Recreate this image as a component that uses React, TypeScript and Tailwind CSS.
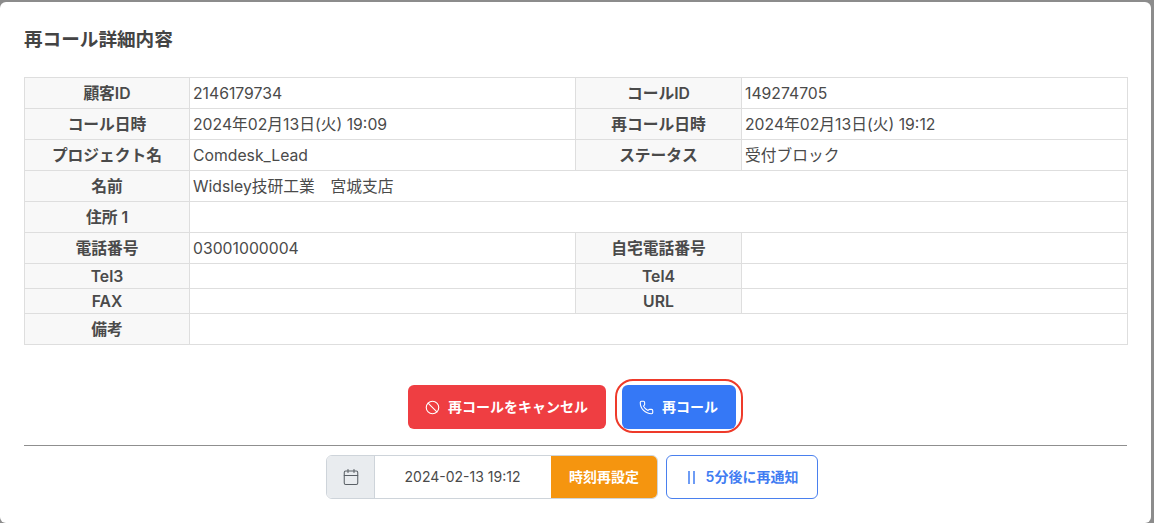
import { Ban, Calendar, Phone } from "lucide-react";

const font = "[font-family:Inter,'Noto_Sans_CJK_JP',sans-serif]";

function Head({ children }: { children?: React.ReactNode }) {
  return (
    <th className="border border-[#dedede] bg-[#f8f8f8] p-0 pt-px text-center align-middle text-[15.75px] leading-none font-semibold text-[#4a4a4a]">
      {children}
    </th>
  );
}

function Cell({ children, colSpan }: { children?: React.ReactNode; colSpan?: number }) {
  return (
    <td colSpan={colSpan} className="border border-[#dedede] pt-px pr-1 pb-0 pl-[3px] align-middle text-[15.75px] leading-none text-[#4a4a4a]">
      {children}
    </td>
  );
}

export default function App() {
  return (
    <div className={`h-[523px] w-[1154px] overflow-hidden bg-[#8c8c8c] pt-[2px] ${font}`}>
      <div className="h-[521px] w-[1151px] rounded-md bg-white px-6 pt-[26px]">
        <h2 className="text-[18.6px] leading-[22px] font-semibold text-[#444444]">再コール詳細内容</h2>

        <table className="mt-[27px] w-[1103px] table-fixed border-collapse">
          <colgroup>
            <col className="w-[165px]" />
            <col className="w-[386px]" />
            <col className="w-[166px]" />
            <col className="w-[386px]" />
          </colgroup>
          <tbody>
            <tr className="h-[31px]">
              <Head>顧客ID</Head>
              <Cell>2146179734</Cell>
              <Head>コールID</Head>
              <Cell>149274705</Cell>
            </tr>
            <tr className="h-[31px]">
              <Head>コール日時</Head>
              <Cell>2024年02月13日(火) 19:09</Cell>
              <Head>再コール日時</Head>
              <Cell>2024年02月13日(火) 19:12</Cell>
            </tr>
            <tr className="h-[31px]">
              <Head>プロジェクト名</Head>
              <Cell>Comdesk_Lead</Cell>
              <Head>ステータス</Head>
              <Cell>受付ブロック</Cell>
            </tr>
            <tr className="h-[31px]">
              <Head>名前</Head>
              <Cell colSpan={3}>Widsley技研工業　宮城支店</Cell>
            </tr>
            <tr className="h-[31px]">
              <Head>住所 1</Head>
              <Cell colSpan={3} />
            </tr>
            <tr className="h-[31px]">
              <Head>電話番号</Head>
              <Cell>03001000004</Cell>
              <Head>自宅電話番号</Head>
              <Cell />
            </tr>
            <tr className="h-[25px]">
              <Head>Tel3</Head>
              <Cell />
              <Head>Tel4</Head>
              <Cell />
            </tr>
            <tr className="h-[25px]">
              <Head>FAX</Head>
              <Cell />
              <Head>URL</Head>
              <Cell />
            </tr>
            <tr className="h-[31px]">
              <Head>備考</Head>
              <Cell colSpan={3} />
            </tr>
          </tbody>
        </table>

        <div className="mt-[40px] flex items-center justify-center gap-4 pr-2">
          <button className="flex h-[44px] w-[198px] items-center justify-center gap-2 rounded-md bg-[#ef3e42] text-sm font-semibold text-white">
            <Ban size={15} strokeWidth={1.75} />
            再コールをキャンセル
          </button>
          <button className="relative flex h-[44px] w-[114px] items-center justify-center gap-2 rounded-md bg-[#3578f6] text-sm font-semibold text-white">
            <Phone size={15} strokeWidth={1.75} />
            再コール
            <span className="absolute -top-[6px] -right-[7px] -bottom-[4px] -left-[7px] rounded-[18px] border-2 border-[#ee3a2a]" />
          </button>
        </div>

        <hr className="mt-[16px] w-[1103px] border-0 border-t border-[#8f8f8f]" />

        <div className="mt-[9px] flex justify-center gap-2 pr-2">
          <div className="flex h-[44px] overflow-hidden rounded-md border border-[#ced4da]">
            <span className="flex w-[48px] items-center justify-center border-r border-[#ced4da] bg-[#e9ecef] pl-px text-[#5a6066]">
              <Calendar size={18} strokeWidth={1.4} />
            </span>
            <span className="flex w-[176px] items-center justify-center text-sm text-[#4a4a4a]">2024-02-13 19:12</span>
            <button className="-my-px -mr-px w-[107px] bg-[#f5950f] text-sm font-semibold text-white">時刻再設定</button>
          </div>
          <button className="flex h-[44px] w-[152px] items-center justify-center gap-[11px] rounded-md border border-[#4a80ee] bg-white pl-[3px] text-sm font-semibold text-[#3f7cf2]">
            <svg width="7" height="13" viewBox="0 0 7 13" fill="none" stroke="currentColor" strokeWidth="1.5">
              <path d="M1 0v13M6 0v13" />
            </svg>
            5分後に再通知
          </button>
        </div>
      </div>
    </div>
  );
}
